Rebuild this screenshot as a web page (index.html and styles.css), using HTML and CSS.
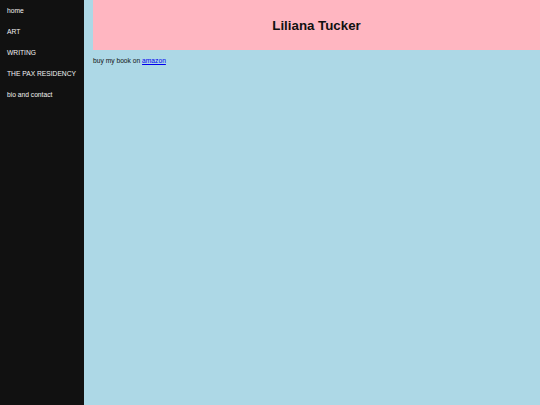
FILE: index.html
```html
<!DOCTYPE html>
<html lang="en">
<head>
<meta charset="utf-8">
<title>Liliana Tucker</title>
<link rel="stylesheet" href="styles.css">
</head>
<body>
<div class="page">
  <nav class="sidenav">
    <a href="#">home</a>
    <a href="#">ART</a>
    <a href="#">WRITING</a>
    <a href="#">THE PAX RESIDENCY</a>
    <a href="#">bio and contact</a>
  </nav>
  <main class="main">
    <header class="header">
      <h1 class="title">Liliana Tucker</h1>
    </header>
    <p class="note">buy my book on <a href="#">amazon</a></p>
  </main>
</div>
</body>
</html>
```

FILE: styles.css
```css
html, body {
  margin: 0;
  padding: 0;
  height: 100%;
}
body {
  font-family: "Liberation Sans", Arial, sans-serif;
  background: #add8e6;
}
.page {
  display: flex;
  min-height: 100vh;
}
.sidenav {
  width: 84px;
  flex: none;
  background: #111111;
  display: flex;
  flex-direction: column;
}
.sidenav a {
  display: block;
  color: #f1f1f1;
  text-decoration: none;
  font-size: 6.7px;
  line-height: 21px;
  padding-left: 7px;
  white-space: nowrap;
}
.main {
  flex: 1;
  padding-left: 9px;
}
.header {
  height: 50px;
  background: #ffb6c1;
  display: flex;
  align-items: center;
  justify-content: center;
}
.title {
  margin: 0;
  font-size: 13.3px;
  font-weight: bold;
  color: #111;
}
.note {
  margin: 7px 0 0;
  font-size: 6.7px;
  color: #111;
}
.note a {
  color: #0000ee;
}
```
